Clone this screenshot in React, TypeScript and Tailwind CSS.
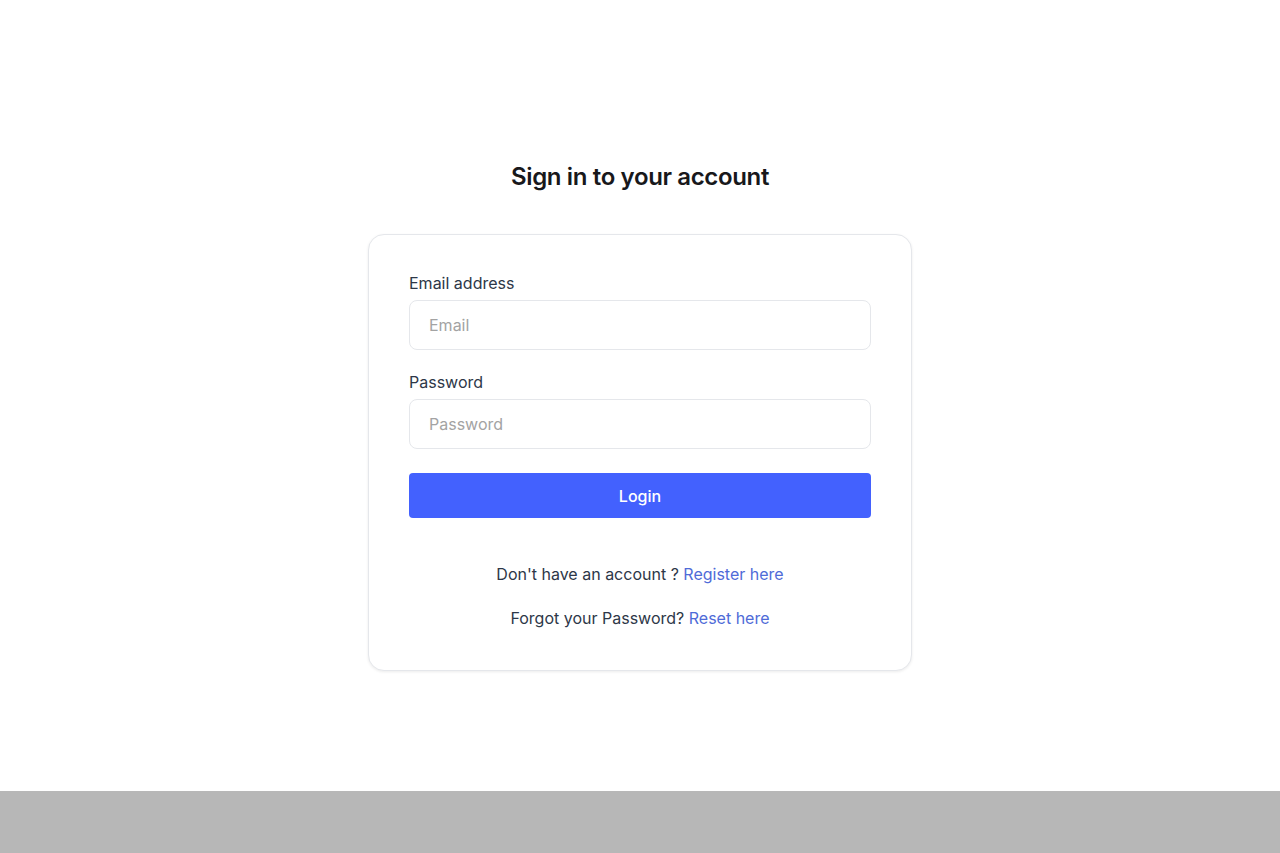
export default function App() {
  return (
    <div className="flex min-h-[853px] flex-col bg-white font-['Inter',sans-serif]">
      <main className="flex flex-1 flex-col items-center pt-[161px]">
        <h1 className="text-2xl leading-8 font-semibold tracking-[-0.015em] text-[#18181b]">Sign in to your account</h1>
        <div className="mt-[41px] w-[544px] rounded-2xl border border-gray-200 bg-white px-10 pt-[36px] pb-[40px] shadow-[0_1px_3px_rgba(0,0,0,0.08)]">
          <label className="block text-base leading-6 text-[#2d3748]">Email address</label>
          <input
            type="email"
            placeholder="Email"
            className="mt-[5px] h-[50px] w-full rounded-lg border border-gray-200 px-[19px] text-base text-gray-700 placeholder:text-[#a3a3a3] outline-none"
          />
          <label className="mt-[20px] block text-base leading-6 text-[#2d3748]">Password</label>
          <input
            type="password"
            placeholder="Password"
            className="mt-[5px] h-[50px] w-full rounded-lg border border-gray-200 px-[19px] text-base text-gray-700 placeholder:text-[#a3a3a3] outline-none"
          />
          <button className="mt-6 h-[45px] w-full rounded bg-[#4361fe] text-base font-medium text-white">
            Login
          </button>
          <p className="mt-[44px] text-center text-base leading-6 text-[#2d3748]">
            Don't have an account ? <a className="text-[#4f6bd8]">Register here</a>
          </p>
          <p className="mt-5 text-center text-base leading-6 text-[#2d3748]">
            Forgot your Password? <a className="text-[#4f6bd8]">Reset here</a>
          </p>
        </div>
      </main>
      <footer className="h-[62px] bg-[#b7b7b7]" />
    </div>
  );
}
